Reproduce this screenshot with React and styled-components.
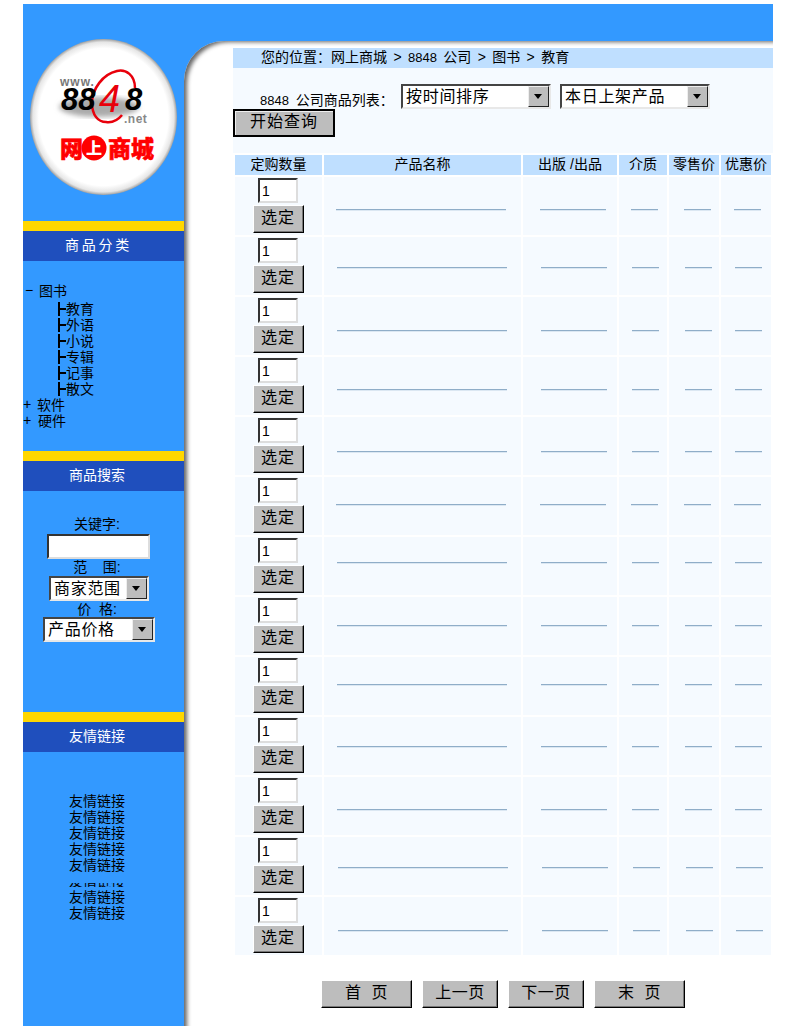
import React from 'react';
import styled, { createGlobalStyle } from 'styled-components';

const GlobalStyle = createGlobalStyle`
  html, body {
    margin: 0;
    padding: 0;
    background: #fff;
    overflow: hidden;
  }
  body {
    font-family: "Liberation Sans", "Noto Sans CJK SC", sans-serif;
    font-size: 14px;
    color: #000;
  }
`;

const Frame = styled.div`
  display: flex;
  width: 750px;
  height: 1022px;
  margin: 4px 0 0 23px;
  background: #3399ff;
  overflow: hidden;
`;

const Sidebar = styled.aside`
  flex: 0 0 161px;
  padding-top: 33px;
`;

const LogoBox = styled.svg`
  display: block;
  width: 161px;
  height: 160px;
`;

const SectionHead = styled.h3`
  box-sizing: border-box;
  height: 40px;
  margin: ${p => p.$top}px 0 0;
  padding: 0 13px 0 0;
  border-top: 10px solid #ffd700;
  background: #1f4fbd;
  color: #fff;
  font-size: 14px;
  font-weight: normal;
  line-height: 28px;
  text-align: center;
  letter-spacing: ${p => p.$spacing || 0}px;
  text-indent: ${p => p.$spacing ? 3 : 0}px;
`;

const Tree = styled.ul`
  list-style: none;
  margin: 22px 0 0;
  padding: 0;
  line-height: 16px;
`;

const TreeRoot = styled.li`
  display: flex;
  height: ${p => p.$tall ? 18 : 16}px;
  padding-left: ${p => p.$tall ? 2 : 0}px;
`;

const TreeSign = styled.span`
  width: ${p => p.$wide ? 15 : 14}px;
  font-family: "Liberation Mono", monospace;
`;

const TreeLeaf = styled.li`
  display: flex;
  align-items: center;
  height: 16px;
  padding-left: 35px;
`;

const LeafMark = styled.span`
  position: relative;
  box-sizing: border-box;
  width: 8px;
  height: 14px;
  border-left: 2px solid #000;
  &::after {
    content: "";
    position: absolute;
    left: 0;
    top: 6px;
    width: 6px;
    height: 2px;
    background: #000;
  }
`;

const SearchForm = styled.form`
  display: flex;
  flex-direction: column;
  align-items: center;
  width: 148px;
  margin-top: 25px;
  line-height: 16px;
`;

const SearchLabel = styled.label`
  display: block;
  height: 16px;
  white-space: pre;
`;

const KeywordInput = styled.input`
  box-sizing: border-box;
  width: 103px;
  height: 25px;
  margin: 2px 0 0 3px;
  padding: 0;
  border: 2px solid;
  border-color: #333 #ddd #ddd #333;
  background: #fff;
`;

const SelectBox = styled.div`
  box-sizing: border-box;
  display: flex;
  align-items: center;
  justify-content: space-between;
  flex: none;
  width: ${p => p.$width}px;
  height: 25px;
  margin-top: ${p => p.$top || 0}px;
  margin-left: ${p => p.$left || 0}px;
  padding: 0 0 0 3px;
  border: 2px solid;
  border-color: #444 #e8e8e8 #e8e8e8 #444;
  background: #fff;
  font-size: 16px;
  letter-spacing: 0.7px;
  line-height: 21px;
  white-space: nowrap;
`;

const SelectArrow = styled.span`
  box-sizing: border-box;
  position: relative;
  flex: none;
  width: 21px;
  height: 21px;
  border: 1px solid;
  border-color: #eee #222 #222 #eee;
  background: #bdbdbd;
  &::after {
    content: "";
    position: absolute;
    left: 5px;
    top: 7px;
    border: 4px solid transparent;
    border-top: 5px solid #000;
    border-bottom: 0;
  }
`;

const LinkList = styled.div`
  display: flex;
  flex-direction: column;
  align-items: center;
  width: 148px;
  margin-top: 41px;
  line-height: 16px;
`;

const LinkItem = styled.a`
  display: block;
  height: 16px;
  color: #000;
  text-decoration: none;
  clip-path: ${p => p.$clipped ? 'inset(10px 0 2px 0)' : 'none'};
`;

const Main = styled.main`
  flex: 1;
  margin-top: 37px;
  padding: 7px 0 0 49px;
  background: #fff;
  border-top-left-radius: 40px;
  box-shadow: inset 5px 3px 4px -2px #666;
`;

const Breadcrumb = styled.div`
  height: 20px;
  padding-left: 28px;
  background: #bfdfff;
  line-height: 18px;
  word-spacing: 2.5px;
  white-space: pre;
`;

const Digits = styled.span`
  font-size: 13px;
`;

const QueryPanel = styled.div`
  height: 85px;
  background: #f5faff;
  overflow: hidden;
`;

const QueryRow = styled.div`
  display: flex;
  align-items: flex-start;
  gap: 9px;
  height: 25px;
  margin-top: 16px;
  padding-left: 27px;
`;

const QueryLabel = styled.span`
  width: 132px;
  padding-top: 5px;
  word-spacing: 3px;
  white-space: pre;
`;

const Button = styled.button`
  box-sizing: border-box;
  display: block;
  padding: 0 0 2px;
  background: #bdbdbd;
  font-family: inherit;
  font-size: 16px;
  line-height: 16px;
  color: #000;
  white-space: pre;
  cursor: pointer;
`;

const QueryButton = styled(Button)`
  width: 102px;
  height: 28px;
  border: 2px solid #000;
  box-shadow: inset 1px 1px 0 #eee;
  letter-spacing: 1px;
`;

const Grid = styled.div`
  display: grid;
  grid-template-columns: 87px 197px 94px 48px 50px 50px;
  column-gap: 2px;
  row-gap: 2px;
  margin: 2px 0 0 2px;
`;

const HeadCell = styled.div`
  height: 20px;
  background: #bfdfff;
  line-height: 18px;
  text-align: center;
  white-space: pre;
`;

const QtyCell = styled.div`
  display: flex;
  flex-direction: column;
  align-items: center;
  height: 58px;
  background: #f5faff;
`;

const QtyInput = styled.input`
  box-sizing: border-box;
  width: 40px;
  height: 25px;
  margin: 1px 1px 0 0;
  padding: 0 0 0 2px;
  border: 2px solid;
  border-color: #333 #ddd #ddd #333;
  background: #fff;
  font-family: "Liberation Sans", sans-serif;
  font-size: 14px;
`;

const PickButton = styled(Button)`
  width: 51px;
  height: 28px;
  margin: 2px 1px 0 0;
  border: 1px solid;
  border-color: #fff #000 #000 #fff;
  box-shadow: inset -1px -1px 0 #777;
  letter-spacing: 1px;
`;

const DataCell = styled.div`
  box-sizing: border-box;
  height: 58px;
  padding-top: ${p => p.$top}px;
  padding-left: ${p => p.$left}px;
  background: #f5faff;
`;

const DataLine = styled.div`
  width: ${p => p.$width}px;
  height: 1px;
  background: #8fadc8;
  box-shadow: 0 1px 0 #dbe7f2;
`;

const Pager = styled.nav`
  display: flex;
  justify-content: center;
  gap: 10px;
  margin-top: 25px;
`;

const PageButton = styled(Button)`
  width: ${p => p.$width}px;
  height: 28px;
  border: 1px solid;
  border-color: #fff #000 #000 #fff;
  box-shadow: inset -1px -1px 0 #777;
  letter-spacing: 0.5px;
`;

const columns = [
  { left: 12, width: 170 },
  { left: 17, width: 66 },
  { left: 12, width: 27 },
  { left: 15, width: 27 },
  { left: 13, width: 27 },
];

const rows = [
  { top: 32, shift: 0 },
  { top: 30, shift: 1 },
  { top: 33, shift: 1 },
  { top: 32, shift: 1 },
  { top: 34, shift: 1 },
  { top: 27, shift: 0 },
  { top: 25, shift: 1 },
  { top: 28, shift: 1 },
  { top: 27, shift: 1 },
  { top: 29, shift: 1 },
  { top: 32, shift: 1 },
  { top: 30, shift: 2 },
  { top: 33, shift: 2 },
];

const headers = ['定购数量', '产品名称', '出版 /出品', '介质', '零售价', '优惠价'];
const leaves = ['教育', '外语', '小说', '专辑', '记事', '散文'];

function Logo() {
  return (
    <LogoBox viewBox="0 0 161 160">
      <defs>
        <radialGradient id="disc" cx="0.5" cy="0.5" r="0.5">
          <stop offset="0.88" stopColor="#fff" />
          <stop offset="0.96" stopColor="#e6e6e6" />
          <stop offset="1" stopColor="#a0a0a0" />
        </radialGradient>
        <filter id="soft"><feGaussianBlur stdDeviation="2.5" /></filter>
      </defs>
      <ellipse cx="80.5" cy="80" rx="73.5" ry="78" fill="url(#disc)" />
      <ellipse cx="76" cy="70" rx="40" ry="10" fill="#aaa" filter="url(#soft)" />
      <text x="37" y="49" fontFamily="Liberation Sans" fontSize="12" fontWeight="bold" fill="#777" letterSpacing="1">www.</text>
      <path d="M112 51 C112 38 103 32 94 34 C80 37 69 52 69 66 C69 78 75 85 83 85 C90 86 95 83 99 78" fill="none" stroke="#e8000b" strokeWidth="2.5" />
      <text x="38" y="73" fontFamily="Liberation Sans" fontSize="31" fontWeight="bold" fontStyle="italic" fill="#000">88</text>
      <text x="76" y="75" fontFamily="Liberation Sans" fontSize="38" fontStyle="italic" fill="#e8000b">4</text>
      <text x="102" y="73" fontFamily="Liberation Sans" fontSize="31" fontWeight="bold" fontStyle="italic" fill="#000">8</text>
      <text x="101" y="86" fontFamily="Liberation Sans" fontSize="12" fontWeight="bold" fill="#888" letterSpacing="0.5">.net</text>
      <text x="37" y="120" fontFamily="Noto Sans CJK SC" fontSize="23" fontWeight="900" fill="#f00" stroke="#f00" strokeWidth="0.6">网</text>
      <circle cx="71" cy="111" r="12.5" fill="#f00" />
      <text x="63" y="117" fontFamily="Noto Sans CJK SC" fontSize="16" fontWeight="900" fill="#fff">上</text>
      <text x="85" y="120" fontFamily="Noto Sans CJK SC" fontSize="23" fontWeight="900" fill="#f00" stroke="#f00" strokeWidth="0.6">商</text>
      <text x="108" y="120" fontFamily="Noto Sans CJK SC" fontSize="23" fontWeight="900" fill="#f00" stroke="#f00" strokeWidth="0.6">城</text>
    </LogoBox>
  );
}

export default function App() {
  return (
    <Frame>
      <GlobalStyle />
      <Sidebar>
        <Logo />

        <SectionHead $top={24} $spacing={2.7}>商品分类</SectionHead>
        <Tree>
          <TreeRoot $tall><TreeSign>−</TreeSign>图书</TreeRoot>
          {leaves.map(name => (
            <TreeLeaf key={name}><LeafMark />{name}</TreeLeaf>
          ))}
          <TreeRoot><TreeSign>+</TreeSign>软件</TreeRoot>
          <TreeRoot><TreeSign $wide>+</TreeSign>硬件</TreeRoot>
        </Tree>

        <SectionHead $top={22}>商品搜索</SectionHead>
        <SearchForm>
          <SearchLabel>关键字:</SearchLabel>
          <KeywordInput />
          <SearchLabel>范    围:</SearchLabel>
          <SelectBox $width={100} $top={1} $left={4}>商家范围<SelectArrow /></SelectBox>
          <SearchLabel>价  格:</SearchLabel>
          <SelectBox $width={112} $left={4}>产品价格<SelectArrow /></SelectBox>
        </SearchForm>

        <SectionHead $top={70}>友情链接</SectionHead>
        <LinkList>
          {[0, 1, 2, 3, 4, 5, 6, 7].map(i => (
            <LinkItem key={i} href="#" $clipped={i === 5}>友情链接</LinkItem>
          ))}
        </LinkList>
      </Sidebar>

      <Main>
        <Breadcrumb>您的位置：网上商城 &gt; <Digits>8848</Digits> 公司 &gt; 图书 &gt; 教育</Breadcrumb>
        <QueryPanel>
          <QueryRow>
            <QueryLabel><Digits>8848</Digits> 公司商品列表：</QueryLabel>
            <SelectBox $width={150}>按时间排序<SelectArrow /></SelectBox>
            <SelectBox $width={150}>本日上架产品<SelectArrow /></SelectBox>
          </QueryRow>
          <QueryButton type="button">开始查询</QueryButton>
        </QueryPanel>

        <Grid>
          {headers.map(h => <HeadCell key={h}>{h}</HeadCell>)}
          {rows.map((row, i) => (
            <React.Fragment key={i}>
              <QtyCell>
                <QtyInput defaultValue="1" />
                <PickButton type="button">选定</PickButton>
              </QtyCell>
              {columns.map((col, c) => (
                <DataCell key={c} $top={row.top} $left={col.left + row.shift}>
                  <DataLine $width={col.width} />
                </DataCell>
              ))}
            </React.Fragment>
          ))}
        </Grid>

        <Pager>
          <PageButton type="button" $width={91}>首  页</PageButton>
          <PageButton type="button" $width={76}>上一页</PageButton>
          <PageButton type="button" $width={76}>下一页</PageButton>
          <PageButton type="button" $width={91}>末  页</PageButton>
        </Pager>
      </Main>
    </Frame>
  );
}
